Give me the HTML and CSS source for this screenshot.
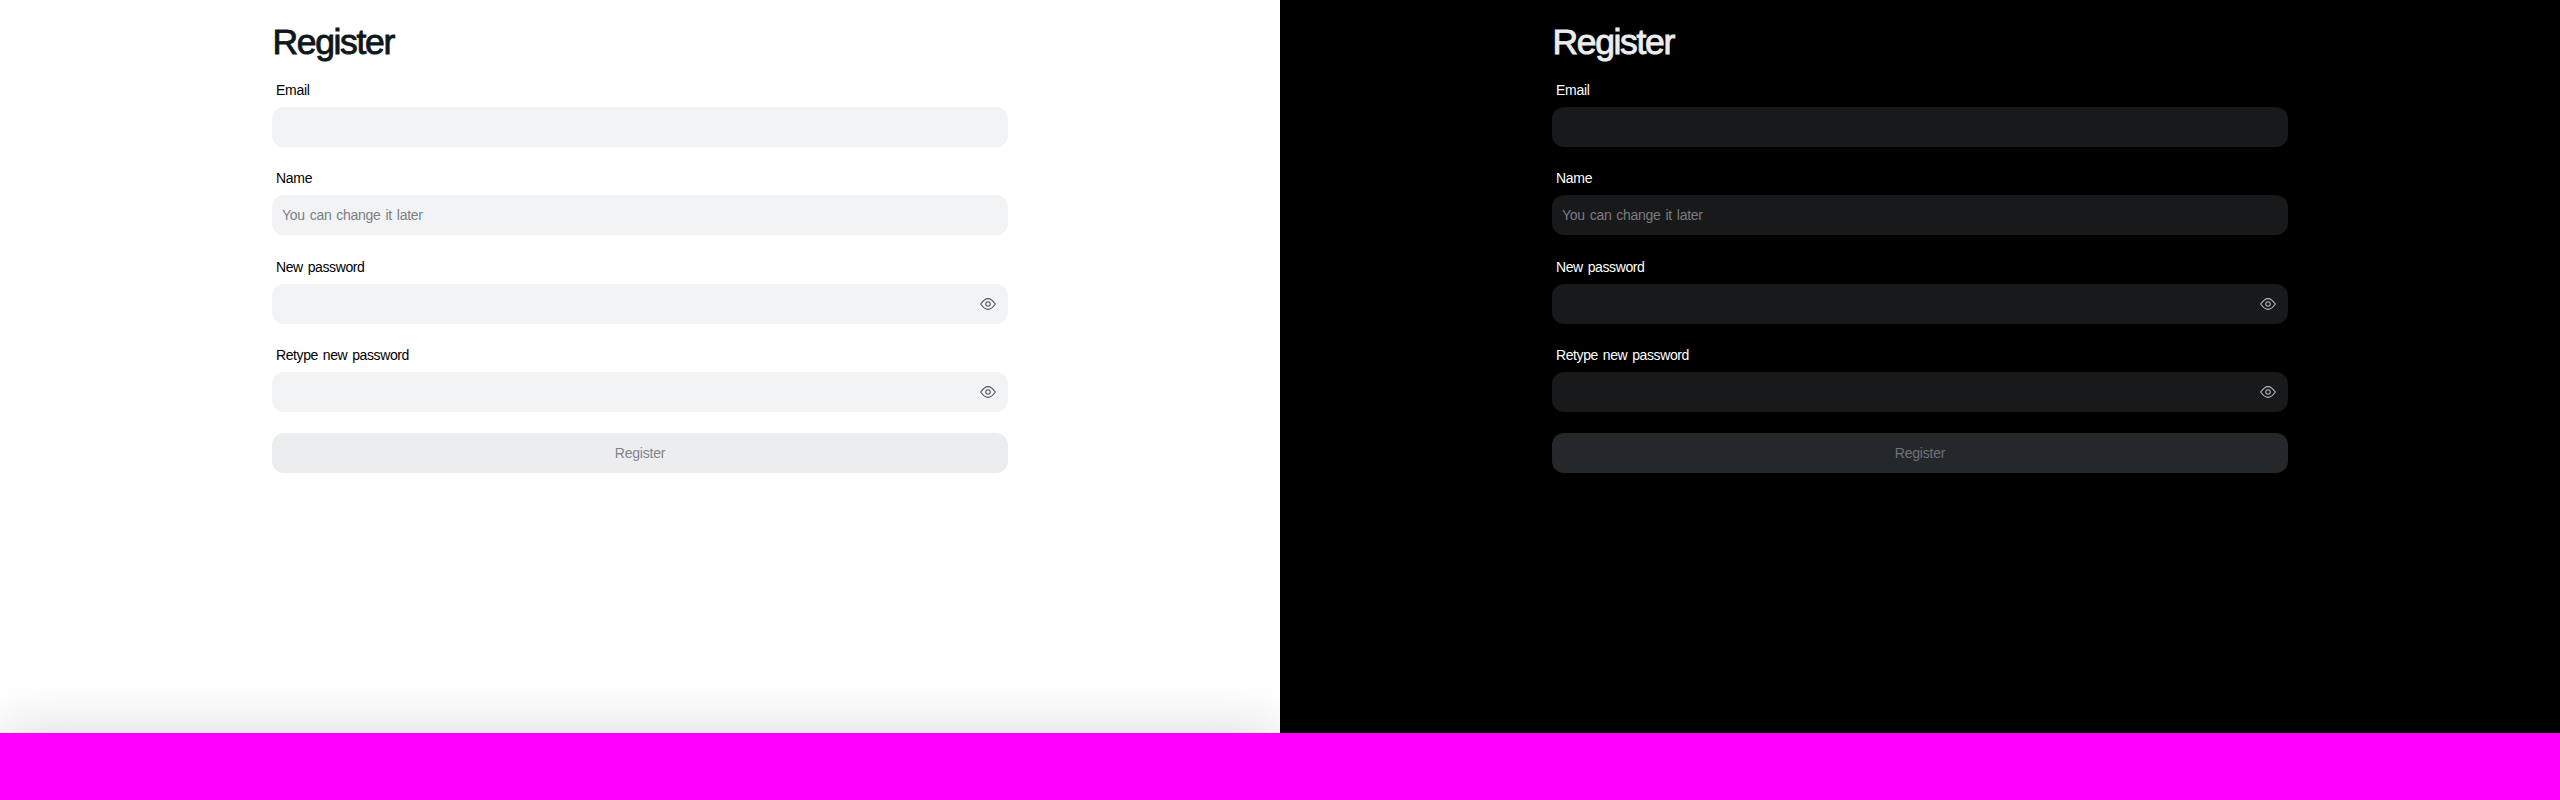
FILE: index.html
```html
<!DOCTYPE html>
<html lang="en">
<head>
<meta charset="utf-8">
<title>Register</title>
<link rel="stylesheet" href="styles.css">
</head>
<body>
<svg class="defs" width="0" height="0">
  <symbol id="eye" viewBox="0 0 16 12">
    <path d="M.6 6C3.4 2.2 5.6.6 8 .6S12.6 2.2 15.4 6C12.6 9.8 10.4 11.4 8 11.4S3.4 9.8.6 6Z"/>
    <circle cx="8" cy="6" r="2.2"/>
  </symbol>
</svg>
<main class="themes">
  <section class="panel light">
    <form class="form">
      <h1 class="title">Register</h1>
      <div class="field"><label class="label short">Email</label><div class="input"></div></div>
      <div class="field"><label class="label short">Name</label><div class="input"><span class="hint">You can change it later</span></div></div>
      <div class="field"><label class="label">New password</label><div class="input"><svg class="eye"><use href="#eye"/></svg></div></div>
      <div class="field"><label class="label">Retype new password</label><div class="input"><svg class="eye"><use href="#eye"/></svg></div></div>
      <div class="button">Register</div>
    </form>
    <div class="shade"></div>
  </section>
  <section class="panel dark">
    <form class="form">
      <h1 class="title">Register</h1>
      <div class="field"><label class="label short">Email</label><div class="input"></div></div>
      <div class="field"><label class="label short">Name</label><div class="input"><span class="hint">You can change it later</span></div></div>
      <div class="field"><label class="label">New password</label><div class="input"><svg class="eye"><use href="#eye"/></svg></div></div>
      <div class="field"><label class="label">Retype new password</label><div class="input"><svg class="eye"><use href="#eye"/></svg></div></div>
      <div class="button">Register</div>
    </form>
  </section>
</main>
</body>
</html>
```
FILE: styles.css
```css
* { box-sizing: border-box; }
body { margin: 0; background: #f0f; font-family: "Liberation Sans", Arial, sans-serif; height: 800px; overflow: hidden; }
.defs { position: absolute; }
.themes { display: grid; grid-template-columns: 1280px 1280px; height: 733px; }
.panel { position: relative; overflow: hidden; background: var(--bg); }
.light { --bg: #fff; --title: #0e181b; --text: #000; --input: #f1f3f5; --hint: #7d8082; --eye: #505558; --button: #ecedef; --button-text: #7f868c; }
.dark { --bg: #000; --title: #ececee; --text: #fff; --input: #18191b; --hint: #7b7c7e; --eye: #b4b6b8; --button: #25282b; --button-text: #6d7277; }
.form { width: 736px; margin: 0 auto; padding-top: 22px; }
.title { margin: 0; height: 56px; padding-left: .5px; font-size: 35.5px; line-height: 41px; font-weight: 400; letter-spacing: -1.35px; color: var(--title); -webkit-text-stroke: .9px var(--title); white-space: nowrap; }
.field { height: 88.33px; }
.label { display: block; height: 29px; padding: 3px 0 0 4px; font-size: 14px; line-height: 18px; letter-spacing: -.4px; word-spacing: 1.4px; color: var(--text); white-space: nowrap; }
.short { letter-spacing: -.3px; }
.input { display: flex; align-items: center; height: 40px; padding: 0 12px 0 10px; border-radius: 12px; background: var(--input); }
.hint { font-size: 14px; letter-spacing: -.28px; word-spacing: 1.3px; color: var(--hint); white-space: nowrap; }
.eye { width: 16px; height: 12px; margin-left: auto; fill: none; stroke: var(--eye); stroke-width: 1.1; }
.button { display: flex; align-items: center; justify-content: center; height: 40px; margin-top: 1.67px; border-radius: 12px; background: var(--button); color: var(--button-text); font-size: 14px; letter-spacing: -.2px; }
.shade { position: absolute; left: 0; right: 0; top: 100%; height: 67px; box-shadow: 0 0 58px rgba(14, 24, 27, .175); }
```
